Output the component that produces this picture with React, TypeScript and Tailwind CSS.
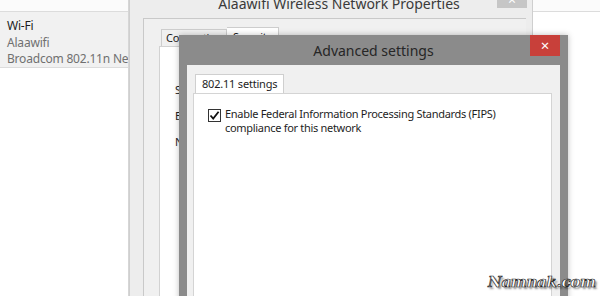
import React from "react";

const ui = "font-['Noto_Sans','Open_Sans',sans-serif]";

function CheckMark() {
  return (
    <svg width="11" height="11" viewBox="0 0 11 11" className="block">
      <path d="M1.5 5.5 L4.2 8.6 L9.6 1.8" fill="none" stroke="#111" strokeWidth="1.8" />
    </svg>
  );
}

function ListPane() {
  return (
    <div className="absolute left-0 top-0 h-full w-[129px] border-r border-[#d6d6d6] bg-white">
      <div className="h-[12px] border-b border-[#dcdcdc] bg-[#fbfbfb]" />
      <div className="flex h-[56px] flex-col overflow-hidden border-b border-[#dcdcdc] bg-[#f1f1f1] pl-[7px] pt-[6px] text-[12px] leading-[16.5px] tracking-[-0.2px] whitespace-nowrap">
        <div className="text-[#1e1e1e]">Wi-Fi</div>
        <div className="text-[#707070]">Alaawifi</div>
        <div className="text-[#707070]">Broadcom 802.11n Network Adapter</div>
      </div>
    </div>
  );
}

function PropertiesWindow() {
  return (
    <div className="absolute left-[129px] top-[-12px] flex h-[320px] w-[404px] flex-col border-x border-[#cfcfcf] bg-[#ededed]">
      <div className="relative flex h-[30px] items-center justify-center pl-[16px] text-[14px] text-[#3a3a3a]">
        Alaawifi Wireless Network Properties
        <div className="absolute right-[5px] top-0 flex h-[20px] w-[30px] items-end justify-center bg-[#c6c6c6] pb-[1px] text-[14px] leading-none text-white">
          ×
        </div>
      </div>
      <div className="ml-[13px] mr-[6px] flex flex-1 flex-col border-l border-t border-[#c9c9c9] bg-[#f0f0f0]">
        <div className="ml-[17px] mt-[8px] flex h-[19px] items-end text-[11px] tracking-[-0.3px] text-[#1e1e1e]">
          <div className="flex h-[17px] items-center border border-b-0 border-[#cdcdcd] bg-[#f0f0f0] px-[4px]">
            Connection
          </div>
          <div className="flex h-[19px] items-center border border-b-0 border-l-0 border-[#cdcdcd] bg-white px-[6px]">
            Security
          </div>
        </div>
        <div className="ml-[15px] flex-1 border-l border-t border-[#d2d2d2] bg-white pl-[15px] pt-[36px] text-[11px] leading-[14px] text-[#1e1e1e]">
          <div className="flex flex-col gap-[12px]">
            <div>Security type:</div>
            <div>Encryption type:</div>
            <div>Network security key</div>
          </div>
        </div>
      </div>
    </div>
  );
}

function AdvancedDialog() {
  return (
    <div className="absolute left-[179px] top-[35px] flex h-[280px] w-[389px] flex-col bg-[#8b8b8b] shadow-[0_0_6px_rgba(0,0,0,0.25)]">
      <div className="relative flex h-[30px] items-center justify-center text-[14px] text-[#262626]">
        Advanced settings
        <div className="absolute right-[8px] top-0 flex h-[21px] w-[30px] items-center justify-center bg-[#c8403a] text-[15px] leading-none text-white">
          ×
        </div>
      </div>
      <div className="mx-[8px] flex flex-1 flex-col bg-[#f0f0f0] pl-[6px] pr-[8px] pt-[10px]">
        <div className="flex h-[18px] items-end pl-[2px]">
          <div className="flex h-[19px] items-center border border-b-0 border-[#cfcfcf] bg-white px-[6px] text-[11px] tracking-[-0.2px] text-[#1e1e1e]">
            802.11 settings
          </div>
        </div>
        <div className="flex-1 border border-[#d4d4d4] bg-white pl-[14px] pt-[14px]">
          <div className="flex items-start gap-[4px] text-[11px] leading-[13.5px] tracking-[-0.3px] text-[#1e1e1e]">
            <div className="mt-[1px] flex h-[13px] w-[13px] shrink-0 items-center justify-center border border-[#333] bg-white">
              <CheckMark />
            </div>
            <div className="-mt-[1px]">
              Enable Federal Information Processing Standards (FIPS)
              <br />
              compliance for this network
            </div>
          </div>
        </div>
      </div>
    </div>
  );
}

export default function App() {
  return (
    <div className={`relative h-[296px] w-[600px] overflow-hidden bg-white ${ui}`}>
      <div className="absolute left-[533px] top-0 h-full w-[67px]">
        <div className="h-[12px] border-b border-[#dcdcdc] bg-[#fbfbfb]" />
      </div>
      <ListPane />
      <PropertiesWindow />
      <AdvancedDialog />
      <div className="absolute left-[488px] top-[271px] font-['DejaVu_Serif',serif] text-[15px] font-bold italic tracking-[-0.3px] text-white [-webkit-text-stroke:0.7px_#222] [text-shadow:2px_2px_2px_rgba(0,0,0,0.45)]">
        Namnak.com
      </div>
    </div>
  );
}
